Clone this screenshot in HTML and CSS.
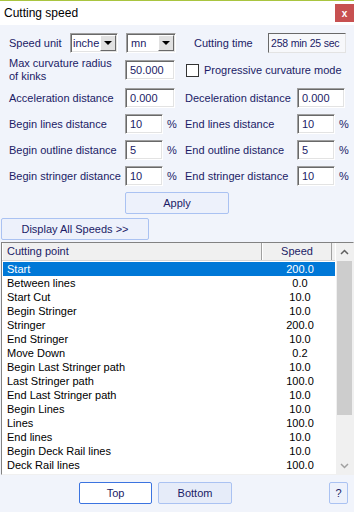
FILE: index.html
```html
<!doctype html>
<html>
<head>
<meta charset="utf-8">
<title>Cutting speed</title>
<link rel="stylesheet" href="styles.css">
</head>
<body>
	<div class="topline"></div>
	<div class="titlebar">
		<span class="title">Cutting speed</span>
		<span class="close">x</span>
	</div>

	<div class="form">
		<div class="row1">
			<span class="lbl-unit">Speed unit</span>
			<div class="select sel1"><span class="val">inche</span><span class="arrow"></span></div>
			<div class="select sel2"><span class="val">mn</span><span class="arrow"></span></div>
			<span class="lbl-time">Cutting time</span>
			<div class="timebox">258 min 25 sec</div>
		</div>

		<div class="row row2">
			<span class="two">Max curvature radius<br>of kinks</span>
			<div class="cell"><div class="inp w50">50.000</div></div>
			<div class="check">
				<span class="box"></span>
				<span>Progressive curvature mode</span>
			</div>
		</div>

		<div class="row row3">
			<span>Acceleration distance</span>
			<div class="cell"><div class="inp w50">0.000</div></div>
			<span>Deceleration distance</span>
			<div class="cell"><div class="inp w48">0.000</div></div>
		</div>

		<div class="row">
			<span>Begin lines distance</span>
			<div class="cell"><div class="inp w38">10</div><span class="pct">%</span></div>
			<span>End lines distance</span>
			<div class="cell"><div class="inp w38">10</div><span class="pct">%</span></div>
		</div>

		<div class="row">
			<span>Begin outline distance</span>
			<div class="cell"><div class="inp w38">5</div><span class="pct">%</span></div>
			<span>End outline distance</span>
			<div class="cell"><div class="inp w38">5</div><span class="pct">%</span></div>
		</div>

		<div class="row">
			<span>Begin stringer distance</span>
			<div class="cell"><div class="inp w38">10</div><span class="pct">%</span></div>
			<span>End stringer distance</span>
			<div class="cell"><div class="inp w38">10</div><span class="pct">%</span></div>
		</div>

		<div class="btn apply">Apply</div>
	</div>

	<div class="btn display">Display All Speeds &gt;&gt;</div>

	<div class="list">
		<div class="main">
			<div class="head">
				<div class="hc hname">Cutting point</div>
				<div class="hc hspeed">Speed</div>
			</div>
			<div class="rows">
				<div class="item sel"><span class="name">Start</span><span class="speed">200.0</span></div>
				<div class="item"><span class="name">Between lines</span><span class="speed">0.0</span></div>
				<div class="item"><span class="name">Start Cut</span><span class="speed">10.0</span></div>
				<div class="item"><span class="name">Begin Stringer</span><span class="speed">10.0</span></div>
				<div class="item"><span class="name">Stringer</span><span class="speed">200.0</span></div>
				<div class="item"><span class="name">End Stringer</span><span class="speed">10.0</span></div>
				<div class="item"><span class="name">Move Down</span><span class="speed">0.2</span></div>
				<div class="item"><span class="name">Begin Last Stringer path</span><span class="speed">10.0</span></div>
				<div class="item"><span class="name">Last Stringer path</span><span class="speed">100.0</span></div>
				<div class="item"><span class="name">End Last Stringer path</span><span class="speed">10.0</span></div>
				<div class="item"><span class="name">Begin Lines</span><span class="speed">10.0</span></div>
				<div class="item"><span class="name">Lines</span><span class="speed">100.0</span></div>
				<div class="item"><span class="name">End lines</span><span class="speed">10.0</span></div>
				<div class="item"><span class="name">Begin Deck Rail lines</span><span class="speed">10.0</span></div>
				<div class="item"><span class="name">Deck Rail lines</span><span class="speed">100.0</span></div>
				<div class="item"><span class="name">End Deck Rail lines</span><span class="speed">10.0</span></div>
			</div>
		</div>
		<div class="scroll">
			<div class="sarrow">
				<svg width="9" height="6" viewBox="0 0 9 6"><polyline points="1,5 4.5,1.5 8,5" fill="none" stroke="#606060" stroke-width="1.5"/></svg>
			</div>
			<div class="thumb"></div>
			<div class="sarrow down">
				<svg width="9" height="6" viewBox="0 0 9 6"><polyline points="1,1 4.5,4.5 8,1" fill="none" stroke="#a0a0a0" stroke-width="1.5"/></svg>
			</div>
		</div>
	</div>

	<div class="footer">
		<div class="btn top">Top</div>
		<div class="btn bottom">Bottom</div>
		<div class="btn help">?</div>
	</div>
</body>
</html>
```

FILE: styles.css
```css
*{
	margin: 0;
	padding: 0;
	box-sizing: border-box;
}
body{
	width: 354px;
	height: 512px;
	overflow: hidden;
	background: #f1f4fb;
	font: 11px "Liberation Sans", Arial, sans-serif;
	color: #1b1b66;
}
.topline{
	height: 1px;
	background: #a9c53f;
}
.titlebar{
	height: 24px;
	background: #fff;
	display: flex;
	justify-content: space-between;
	align-items: flex-start;
}
.title{
	font-size: 12px;
	color: #000;
	padding: 5px 0 0 4px;
}
.close{
	width: 19px;
	height: 18px;
	margin-top: 3px;
	background: #c75050;
	color: #fff;
	font-weight: bold;
	font-size: 10px;
	display: flex;
	align-items: center;
	justify-content: center;
}
.form{
	padding: 8px 0 0 9px;
}
.row1{
	display: flex;
	align-items: center;
	height: 20px;
}
.lbl-unit{
	width: 61px;
}
.select{
	height: 20px;
	background: #fff;
	border: 1px solid;
	border-color: #a0a0a0 #fff #fff #a0a0a0;
	box-shadow: inset 1px 1px #696969, inset -1px -1px #e3e3e3;
	display: flex;
	align-items: center;
	overflow: hidden;
}
.select .val{
	flex: 1;
	padding-left: 2px;
	overflow: hidden;
	white-space: nowrap;
}
.sel1{
	width: 48px;
}
.sel2{
	width: 50px;
	margin-left: 8px;
}
.sel2 .val{
	padding-left: 4px;
}
.arrow{
	width: 16px;
	height: 16px;
	margin-right: 1px;
	background: #e1e1e1;
	border: 1px solid;
	border-color: #fff #696969 #696969 #fff;
	position: relative;
}
.arrow:after{
	content: "";
	position: absolute;
	left: 3px;
	top: 5px;
	border-left: 4px solid transparent;
	border-right: 4px solid transparent;
	border-top: 4px solid #000;
}
.lbl-time{
	margin-left: 18px;
	width: 74px;
}
.timebox{
	width: 78px;
	height: 20px;
	line-height: 18px;
	padding-left: 2px;
	font-size: 10.5px;
	letter-spacing: -0.2px;
	background: #f7f8fb;
	border: 1px solid;
	border-color: #696969 #e3e3e3 #e3e3e3 #696969;
	white-space: nowrap;
	overflow: hidden;
}
.row{
	display: grid;
	grid-template-columns: 116px 60px 112px 1fr;
	align-items: center;
	height: 20px;
	margin-top: 6px;
	white-space: nowrap;
}
.row2{
	height: 26px;
	margin-top: 4px;
}
.row3{
	margin-top: 5px;
}
.two{
	line-height: 13px;
}
.cell{
	display: flex;
	align-items: center;
}
.inp{
	height: 20px;
	line-height: 18px;
	padding-left: 4px;
	background: #fff;
	border: 1px solid;
	border-color: #a0a0a0 #fff #fff #a0a0a0;
	box-shadow: inset 1px 1px #696969, inset -1px -1px #e3e3e3;
}
.w50{
	width: 50px;
}
.w48{
	width: 48px;
}
.w38{
	width: 38px;
}
.pct{
	margin-left: 4px;
}
.check{
	grid-column: 3 / 5;
	display: flex;
	align-items: center;
}
.check .box{
	width: 13px;
	height: 13px;
	margin: 0 5px 0 1px;
	background: #fff;
	border: 1px solid #333;
}
.btn{
	height: 22px;
	display: flex;
	align-items: center;
	justify-content: center;
	background: #edf1fb;
	border: 1px solid #aac2f2;
	border-radius: 2px;
	color: #1b1b66;
}
.apply{
	width: 104px;
	margin: 6px 0 0 116px;
}
.display{
	width: 148px;
	margin: 4px 0 0 1px;
}
.list{
	width: 353px;
	height: 233px;
	margin: 2px 0 0 1px;
	background: #fff;
	border: 1px solid;
	border-color: #828282 #f0f0f0 #f0f0f0 #828282;
	display: flex;
	overflow: hidden;
}
.main{
	width: 333px;
	overflow: hidden;
}
.head{
	height: 18px;
	display: flex;
	background: #f0f0f0;
	border-bottom: 1px solid #d5d5d5;
}
.hc{
	height: 17px;
	line-height: 16px;
	border-left: 1px solid #fff;
	border-right: 1px solid #a0a0a0;
	color: #1b1b66;
}
.hname{
	width: 260px;
	padding-left: 4px;
}
.hspeed{
	width: 70px;
	text-align: center;
}
.rows{
	margin-top: 1px;
	padding-left: 1px;
}
.item{
	display: flex;
	height: 14px;
	line-height: 14px;
	color: #000;
	white-space: nowrap;
}
.item.sel{
	background: #0078d7;
	color: #fff;
}
.name{
	flex: 1;
	padding-left: 4px;
}
.speed{
	width: 70px;
	text-align: center;
}
.scroll{
	width: 17px;
	margin-left: 1px;
	background: #f0f0f0;
	display: flex;
	flex-direction: column;
}
.sarrow{
	height: 17px;
	display: flex;
	align-items: center;
	justify-content: center;
}
.sarrow.down{
	margin-top: auto;
	height: 16px;
}
.thumb{
	height: 154px;
	margin: 1px 1px 0;
	background: #cdcdcd;
}
.footer{
	display: flex;
	padding: 7px 0 0 79px;
}
.top{
	width: 73px;
	background: #fff;
	border-color: #3c74e0;
}
.bottom{
	width: 74px;
	margin-left: 6px;
	background: #e6ecf9;
}
.help{
	width: 19px;
	margin-left: 97px;
}
```
